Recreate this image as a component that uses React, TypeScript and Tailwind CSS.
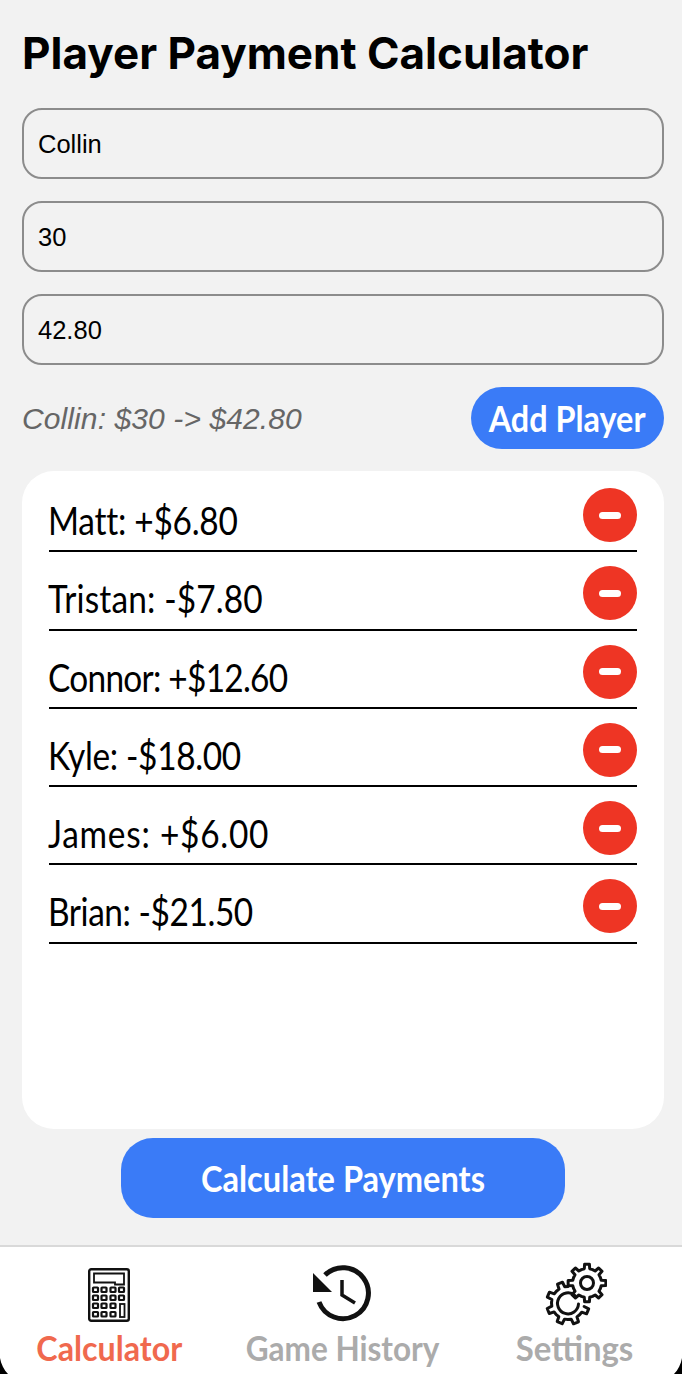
import { useState } from 'react'

const players = [
  { name: 'Matt', amount: '+$6.80', fit: 'tracking-[-0.3px]' },
  { name: 'Tristan', amount: '-$7.80', fit: 'tracking-[0.15px]' },
  { name: 'Connor', amount: '+$12.60', fit: 'tracking-[-0.85px]' },
  { name: 'Kyle', amount: '-$18.00', fit: 'tracking-[-0.4px]' },
  { name: 'James', amount: '+$6.00', fit: 'tracking-[0.85px]' },
  { name: 'Brian', amount: '-$21.50', fit: 'tracking-[-0.5px]' },
]

const narrow = { fontFamily: 'Lato, "Open Sans", sans-serif' }

function CalculatorIcon() {
  const keys = []
  const xs = [5, 13.5, 22.5, 31]
  const ys = [19.5, 27.5, 35.5, 44]
  for (let row = 0; row < 4; row++) {
    for (let col = 0; col < 4; col++) {
      if (col === 3 && row > 1) continue
      keys.push(<rect key={`${row}-${col}`} x={xs[col]} y={ys[row]} width="5" height="4.5" rx="0.6" fill="none" stroke="#111" strokeWidth="2.2" />)
    }
  }
  return (
    <svg width="42" height="54" viewBox="0 0 42 54" className="block">
      <rect x="1.2" y="1.2" width="39.6" height="51.6" rx="2" fill="none" stroke="#111" strokeWidth="2.4" />
      <path d="M6 5.500h30v11h-9v-2H6z" fill="none" stroke="#111" strokeWidth="1.800" />
      <rect x="32" y="36" width="4.500" height="13" fill="none" stroke="#111" strokeWidth="1.800" />
      {keys}
    </svg>
  )
}

function HistoryIcon() {
  return (
    <svg width="62" height="58" viewBox="0 0 62 58" className="block">
      <path d="M13 11A25.500 25.500 0 1 1 7 38" fill="none" stroke="#111" strokeWidth="5" />
      <path d="M1 9V28H20z" fill="#111" />
      <path d="M30 16V31L43 39" fill="none" stroke="#111" strokeWidth="3.500" />
    </svg>
  )
}

// outline of gear teeth, angles in degrees
function gearPath(cx: number, cy: number, inner: number, outer: number, angles: number[], closed: boolean) {
  const step = 45 * (Math.PI / 180)
  let d = ''
  angles.forEach((deg, i) => {
    const a = deg * (Math.PI / 180)
    const dir = closed || angles.length < 2 ? 1 : Math.sign(angles[1] - angles[0])
    const pts: [number, number][] = [
      [inner, a - dir * step * 0.5],
      [inner, a - dir * step * 0.24],
      [outer, a - dir * step * 0.16],
      [outer, a + dir * step * 0.16],
      [inner, a + dir * step * 0.24],
    ]
    pts.forEach(([r, t], j) => {
      const x = (cx + r * Math.cos(t)).toFixed(2)
      const y = (cy + r * Math.sin(t)).toFixed(2)
      d += `${i === 0 && j === 0 ? 'M' : 'L'}${x} ${y}`
    })
  })
  return d + (closed ? 'Z' : '')
}

function SettingsIcon() {
  return (
    <svg width="64" height="64" viewBox="0 0 64 64" className="block">
      <path d={gearPath(44, 21, 14.5, 19, [0, 45, 90, 135, 180, 225, 270, 315], true)} fill="none" stroke="#111" strokeWidth="3" strokeLinejoin="round" />
      <circle cx="44" cy="21" r="6.500" fill="none" stroke="#111" strokeWidth="3" />
      <path d={gearPath(25, 41, 16.5, 21.5, [-112, -157, -202, -247, -292, -337], false)} fill="none" stroke="#111" strokeWidth="3" strokeLinejoin="round" strokeLinecap="round" />
      <path d="M32 33.500A10.500 10.500 0 1 0 35.500 42" fill="none" stroke="#111" strokeWidth="3" strokeLinecap="round" />
    </svg>
  )
}

export default function App() {
  const [name, setName] = useState('Collin')
  const [buyIn, setBuyIn] = useState('30')
  const [cashOut, setCashOut] = useState('42.80')

  return (
    <div className="relative flex h-[1374px] w-[682px] flex-col overflow-hidden bg-[#f2f2f2]" style={{ fontFamily: '"Liberation Sans", Arial, sans-serif' }}>
      <div className="flex flex-1 flex-col pr-[18px] pl-[22px]">
        <h1 className="mt-[27px] text-[44px] leading-[52px] font-bold text-black" style={{ fontFamily: 'Inter, sans-serif' }}>
          Player Payment Calculator
        </h1>

        <div className="mt-[29px] flex flex-col gap-[22px]">
          <input value={name} onChange={(e) => setName(e.target.value)} className="h-[71px] w-full rounded-[20px] border-2 border-[#8c8c8c] bg-transparent px-[14px] pt-[2px] text-[25.500px] text-black outline-none" />
          <input value={buyIn} onChange={(e) => setBuyIn(e.target.value)} className="h-[71px] w-full rounded-[20px] border-2 border-[#8c8c8c] bg-transparent px-[14px] pt-[2px] text-[25.500px] text-black outline-none" />
          <input value={cashOut} onChange={(e) => setCashOut(e.target.value)} className="h-[71px] w-full rounded-[20px] border-2 border-[#8c8c8c] bg-transparent px-[14px] pt-[2px] text-[25.500px] text-black outline-none" />
        </div>

        <div className="mt-[22px] flex items-center justify-between">
          <p className="text-[30px] tracking-[0.1px] text-[#666666] italic">Collin: $30 -&gt; $42.80</p>
          <button className="h-[62px] w-[193px] rounded-full bg-[#3a7bf7] text-[36px] font-bold text-white" style={narrow}>
            <span className="inline-block origin-center scale-x-[0.9] whitespace-nowrap">Add Player</span>
          </button>
        </div>

        <div className="mt-[22px] h-[658px] rounded-[32px] bg-white px-[27px] pt-[3px]">
          {players.map((p) => (
            <div key={p.name} className="flex h-[78.300px] items-start justify-between border-b-2 border-black">
              <span className={`mt-[21px] -ml-[1px] origin-left scale-x-[0.88] text-[38px] leading-[50px] whitespace-nowrap text-black ${p.fit}`} style={narrow}>
                {p.name}: {p.amount}
              </span>
              <button className="mt-[14px] flex h-[54px] w-[54px] items-center justify-center rounded-full bg-[#ee3524]">
                <span className="h-[7px] w-[22px] rounded-full bg-white" />
              </button>
            </div>
          ))}
        </div>

        <button className="mx-auto mt-[9px] h-[80px] w-[444px] rounded-[32px] bg-[#3a7bf7] text-[36px] font-bold text-white" style={narrow}>
          <span className="inline-block origin-center scale-x-[0.905] whitespace-nowrap">Calculate Payments</span>
        </button>
      </div>

      <nav className="grid h-[129px] grid-cols-[218px_250px_214px] border-t-2 border-[#d9d9d9] bg-white">
        <div className="flex flex-col items-center pt-[21px]">
          <CalculatorIcon />
          <span className="mt-[5px] scale-x-[0.92] text-[35px] leading-[40px] font-bold whitespace-nowrap text-[#f0694e]" style={narrow}>Calculator</span>
        </div>
        <div className="flex flex-col items-center pt-[17px]">
          <HistoryIcon />
          <span className="mt-[5px] scale-x-[0.9] text-[35px] leading-[40px] font-bold whitespace-nowrap text-[#ababab]" style={narrow}>Game History</span>
        </div>
        <div className="flex flex-col items-center pt-[15px]">
          <SettingsIcon />
          <span className="mt-[1px] scale-x-[0.94] text-[35px] leading-[40px] font-bold whitespace-nowrap text-[#ababab]" style={narrow}>Settings</span>
        </div>
      </nav>

      <svg width="682" height="30" viewBox="0 0 682 30" className="pointer-events-none absolute bottom-0 left-0">
        <path d="M0 14C1 20 4 26 8 30H0zM682 14C681 20 678 26 674 30H682z" fill="#000" />
      </svg>
    </div>
  )
}
